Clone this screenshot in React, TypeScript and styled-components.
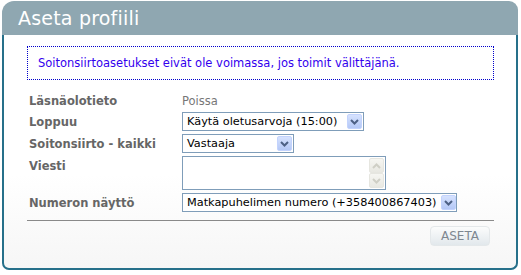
import styled, { createGlobalStyle } from "styled-components";

const GlobalStyle = createGlobalStyle`
  body {
    margin: 0;
    background: #ffffff;
    font-family: "DejaVu Sans", Verdana, sans-serif;
  }
`;

const Panel = styled.div`
  width: 516px;
  height: 269px;
  margin: 1px 0 0 2px;
  display: flex;
  flex-direction: column;
`;

const Header = styled.div`
  height: 34px;
  background: #8fa7b1;
  border-radius: 12px 9px 0 0;
  display: flex;
  align-items: center;
  padding-left: 16px;
  color: #ffffff;
  font-size: 19px;
  letter-spacing: 0.2px;
`;

const Body = styled.div`
  flex: 1;
  border: 2px solid #26708a;
  border-top: none;
  border-radius: 0 0 7px 7px;
  background: linear-gradient(#ffffff 60%, #f6f6f6);
  padding: 11px 22px 0 23px;
`;

const Notice = styled.div`
  height: 32px;
  border: 1px dotted #0000cc;
  display: flex;
  align-items: center;
  padding-left: 10px;
  font-size: 11.5px;
  color: #3300ee;
`;

const Form = styled.div`
  display: grid;
  grid-template-columns: 153px auto;
  row-gap: 3px;
  margin-top: 13px;
  padding-left: 2px;
`;

const Label = styled.div<{ $short?: boolean }>`
  font-size: 11.5px;
  font-weight: bold;
  color: #666666;
  height: ${(p) => (p.$short ? 16 : 19)}px;
  display: flex;
  align-items: center;
  white-space: nowrap;
`;

const Value = styled.div`
  font-size: 11.5px;
  color: #777777;
  height: 16px;
  display: flex;
  align-items: center;
`;

const Select = styled.div<{ $width: number }>`
  width: ${(p) => p.$width}px;
  height: 19px;
  box-sizing: border-box;
  border: 1px solid #7f9db9;
  background: #ffffff;
  display: flex;
  align-items: center;
  justify-content: space-between;
  gap: 4px;
  padding: 0 1px 0 4px;
  font-size: 11.3px;
  color: #000000;
  white-space: nowrap;
  overflow: hidden;
`;

const ArrowButton = styled.span<{ $disabled?: boolean }>`
  flex-shrink: 0;
  width: 15px;
  height: 15px;
  box-sizing: border-box;
  border: 1px solid ${(p) => (p.$disabled ? "#e6e6e0" : "#c3d3fd")};
  border-radius: 2px;
  background: ${(p) =>
    p.$disabled
      ? "linear-gradient(#f6f6f2, #e8e8e2)"
      : "linear-gradient(#d6e2fe, #b4c8f6)"};
  display: flex;
  align-items: center;
  justify-content: center;
`;

const TextArea = styled.div`
  width: 204px;
  height: 34px;
  box-sizing: border-box;
  border: 1px solid #7f9db9;
  background: #ffffff;
  display: flex;
  justify-content: flex-end;
  padding: 1px;
`;

const ScrollColumn = styled.div`
  display: flex;
  flex-direction: column;
`;

const Separator = styled.div`
  margin-top: 8px;
  border-top: 1px solid #8a8a8a;
`;

const Actions = styled.div`
  display: flex;
  justify-content: flex-end;
  padding-right: 4px;
  margin-top: 5px;
`;

const Button = styled.button`
  width: 60px;
  height: 20px;
  border: 1px solid #e4e8ea;
  border-radius: 4px;
  background: linear-gradient(#fbfcfc, #e2e8ec);
  font-family: Tahoma, "DejaVu Sans", sans-serif;
  font-size: 12px;
  color: #7d8790;
  padding: 0;
`;

function Chevron({ up, color }: { up?: boolean; color: string }) {
  return (
    <svg width="9" height="6" viewBox="0 0 9 6">
      <path
        d={up ? "M1 5 L4.5 1.5 L8 5" : "M1 1 L4.5 4.5 L8 1"}
        fill="none"
        stroke={color}
        strokeWidth="2"
      />
    </svg>
  );
}

function Dropdown({ text, width }: { text: string; width: number }) {
  return (
    <Select $width={width}>
      <span>{text}</span>
      <ArrowButton>
        <Chevron color="#4d6185" />
      </ArrowButton>
    </Select>
  );
}

export default function App() {
  return (
    <>
      <GlobalStyle />
      <Panel>
        <Header>Aseta profiili</Header>
        <Body>
          <Notice>
            Soitonsiirtoasetukset eivät ole voimassa, jos toimit välittäjänä.
          </Notice>
          <Form>
            <Label $short>Läsnäolotieto</Label>
            <Value>Poissa</Value>
            <Label>Loppuu</Label>
            <div>
              <Dropdown text="Käytä oletusarvoja (15:00)" width={182} />
            </div>
            <Label>Soitonsiirto - kaikki</Label>
            <div>
              <Dropdown text="Vastaaja" width={112} />
            </div>
            <Label>Viesti</Label>
            <TextArea>
              <ScrollColumn>
                <ArrowButton $disabled>
                  <Chevron up color="#cfcfc6" />
                </ArrowButton>
                <ArrowButton $disabled>
                  <Chevron color="#cfcfc6" />
                </ArrowButton>
              </ScrollColumn>
            </TextArea>
            <Label>Numeron näyttö</Label>
            <div>
              <Dropdown text="Matkapuhelimen numero (+358400867403)" width={275} />
            </div>
          </Form>
          <Separator />
          <Actions>
            <Button>ASETA</Button>
          </Actions>
        </Body>
      </Panel>
    </>
  );
}
